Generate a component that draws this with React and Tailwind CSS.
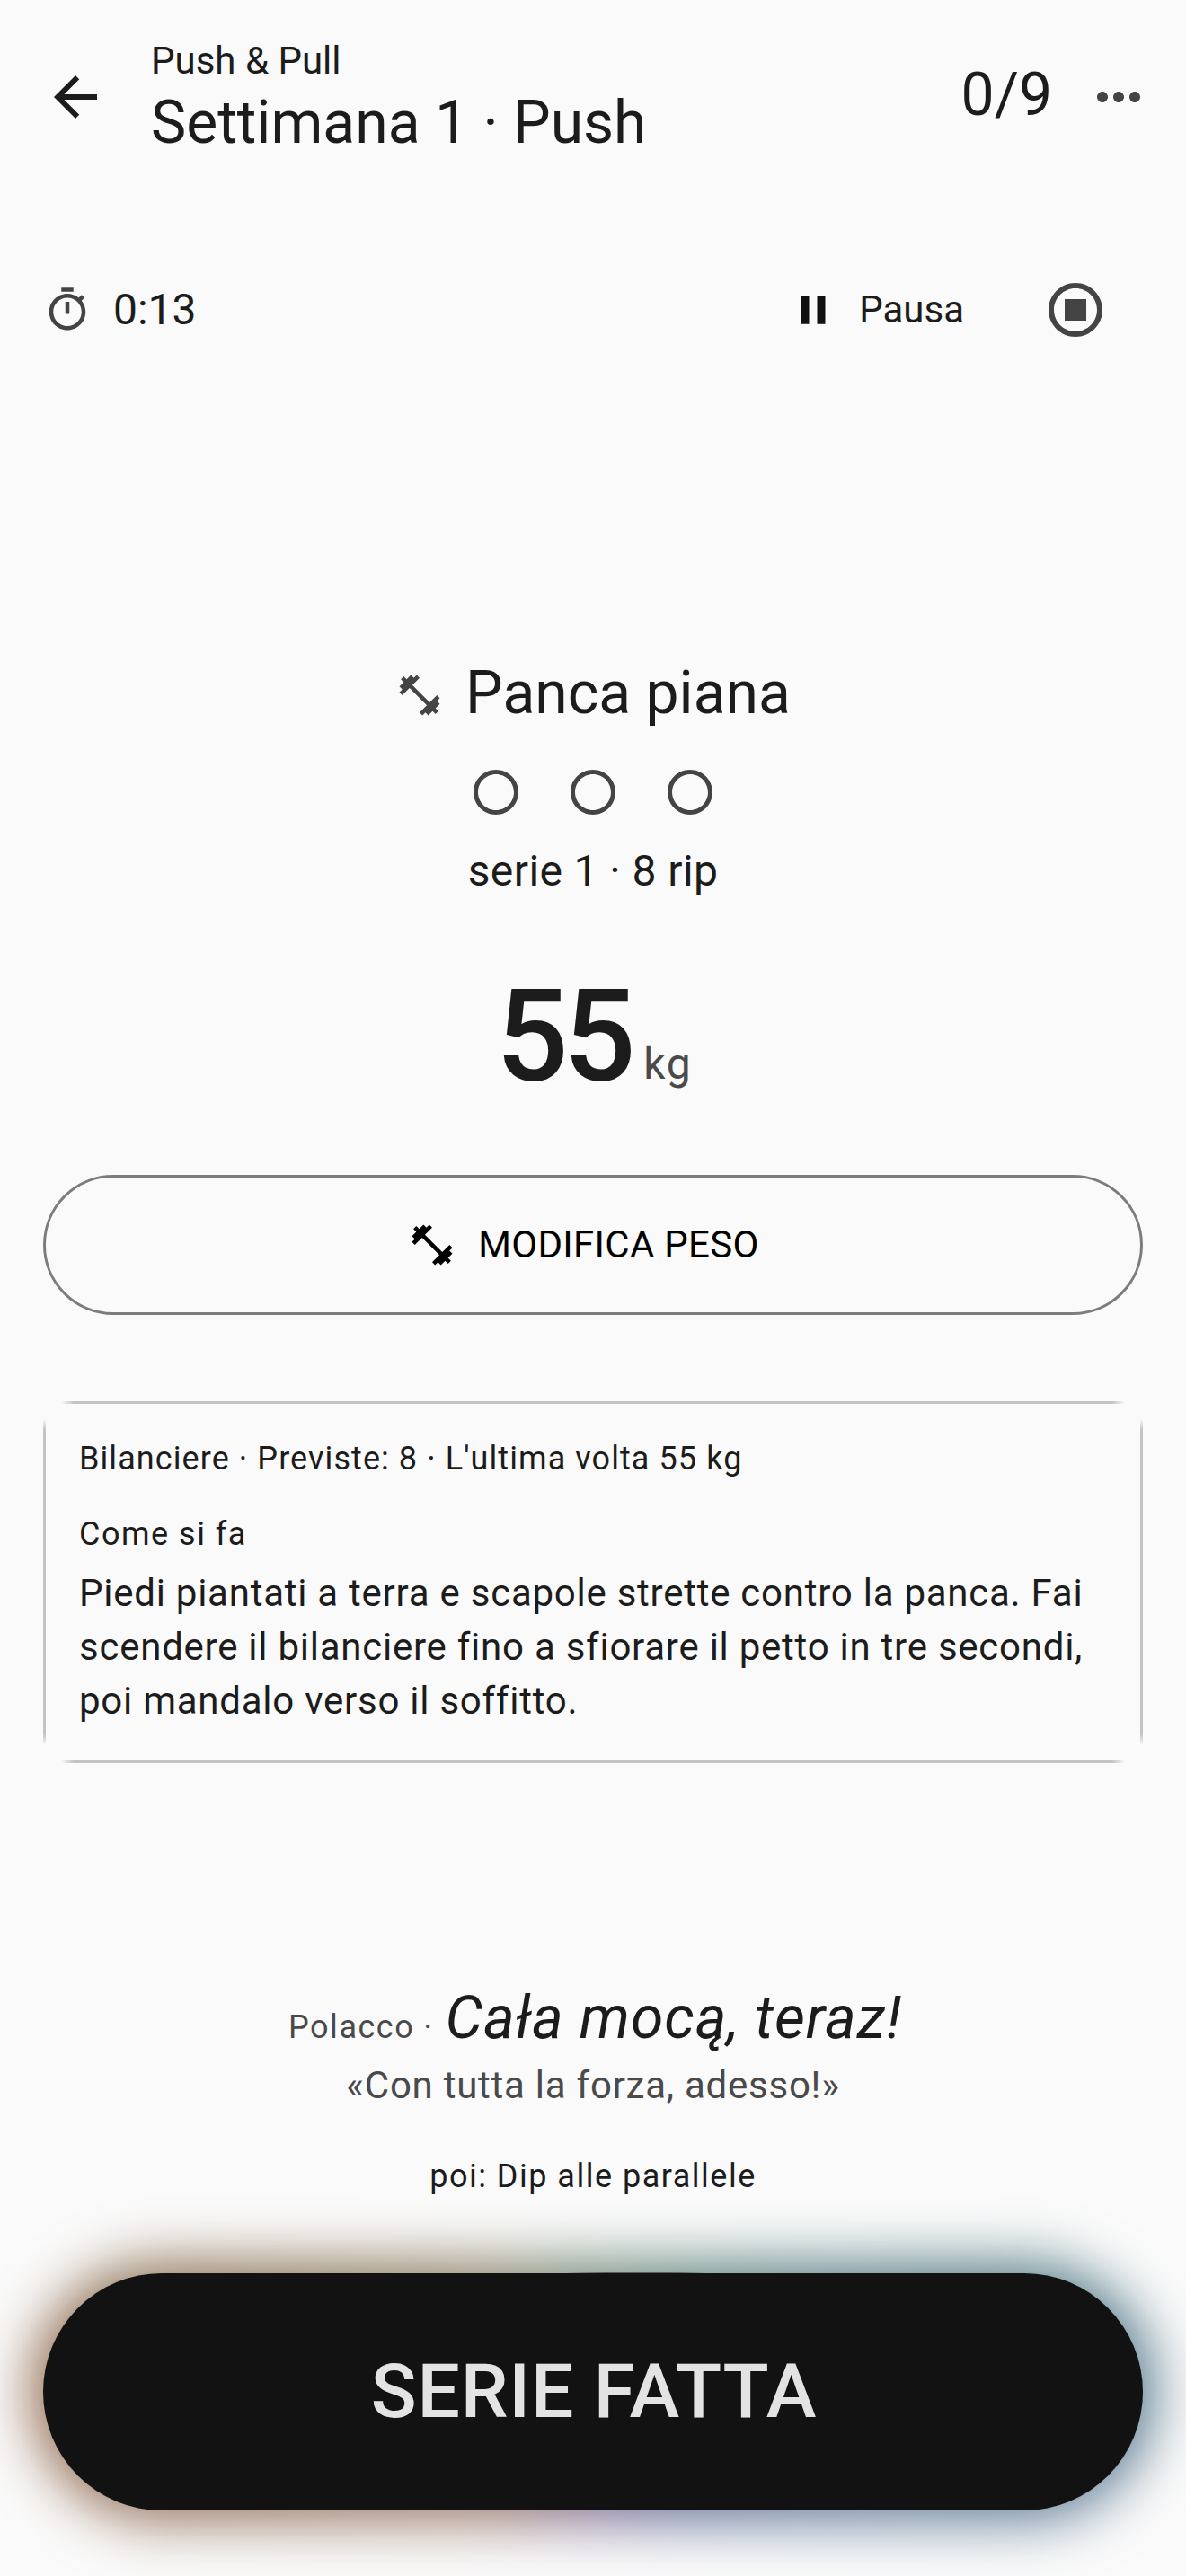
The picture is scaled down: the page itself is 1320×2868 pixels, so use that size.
const Icon = ({ d, className }) => (
  <svg viewBox="0 0 24 24" className={className} fill="currentColor" aria-hidden="true">
    <path d={d} />
  </svg>
);

const ARROW = "M20 11H7.83l5.59-5.59L12 4l-8 8 8 8 1.41-1.41L7.83 13H20v-2z";
const MORE = "M6 10c-1.1 0-2 .9-2 2s.9 2 2 2 2-.9 2-2-.9-2-2-2zm12 0c-1.1 0-2 .9-2 2s.9 2 2 2 2-.9 2-2-.9-2-2-2zm-6 0c-1.1 0-2 .9-2 2s.9 2 2 2 2-.9 2-2-.9-2-2-2z";
const TIMER = "M15 1H9v2h6V1zm-4 13h2V8h-2v6zm8.03-6.61l1.42-1.42c-.43-.51-.9-.99-1.41-1.41l-1.42 1.42C16.07 4.74 14.12 4 12 4c-4.97 0-9 4.03-9 9s4.02 9 9 9 9-4.03 9-9c0-2.12-.74-4.07-1.97-5.61zM12 20c-3.87 0-7-3.13-7-7s3.13-7 7-7 7 3.13 7 7-3.13 7-7 7z";
const PAUSE = "M6 19h4V5H6v14zm8-14v14h4V5h-4z";
const STOP = "M12 2C6.48 2 2 6.48 2 12s4.48 10 10 10 10-4.48 10-10S17.52 2 12 2zm0 18c-4.42 0-8-3.58-8-8s3.58-8 8-8 8 3.58 8 8-3.58 8-8 8zm4-12H8v8h8V8z";
const GYM = "M20.57 14.86L22 13.43 20.57 12 17 15.57 8.43 7 12 3.43 10.57 2 9.14 3.43 7.71 2 5.57 4.14 4.14 2.71 2.71 4.14l1.43 1.43L2 7.71l1.43 1.43L2 10.57 3.43 12 7 8.43 15.57 17 12 20.57 13.43 22l1.43-1.43L16.29 22l2.14-2.14 1.43 1.43 1.43-1.43-1.43-1.43L22 16.29z";
const RING = "M12 2C6.47 2 2 6.47 2 12s4.47 10 10 10 10-4.47 10-10S17.53 2 12 2zm0 18c-4.41 0-8-3.59-8-8s3.59-8 8-8 8 3.59 8 8-3.59 8-8 8z";

export default function App() {
  return (
    <div className="h-[2868px] w-[1320px] overflow-hidden bg-[#fafafa] font-[Roboto,sans-serif] text-[#1c1c1c]">
      {/* App bar */}
      <header className="flex h-[180px] items-start pt-[36px]">
        <div className="ml-[12px] flex h-[144px] w-[144px] shrink-0 items-center justify-center">
          <Icon d={ARROW} className="h-[72px] w-[72px]" />
        </div>
        <div className="ml-[12px] flex-1 pt-[5px]">
          <div className="h-[54px] text-[42px] leading-[54px]">Push &amp; Pull</div>
          <div className="h-[84px] text-[66px] leading-[84px]">Settimana 1 · Push</div>
        </div>
        <div className="flex h-[144px] items-center pb-[4px] text-[66px] leading-[84px]">0/9</div>
        <div className="ml-[2px] mr-[3px] flex h-[144px] w-[144px] shrink-0 items-center justify-center text-[#444444]">
          <Icon d={MORE} className="h-[72px] w-[72px]" />
        </div>
      </header>

      {/* Timer row */}
      <div className="mt-[120px] flex h-[90px] items-center pl-[48px] pr-[87px]">
        <Icon d={TIMER} className="h-[54px] w-[54px] text-[#444444]" />
        <span className="ml-[24px] text-[48px] leading-[60px]">0:13</span>
        <div className="ml-auto flex items-center">
          <Icon d={PAUSE} className="h-[54px] w-[54px] text-[#111111]" />
          <span className="ml-[24px] text-[42px] leading-[54px]">Pausa</span>
        </div>
        <Icon d={STOP} className="ml-[88px] h-[72px] w-[72px] text-[#444444]" />
      </div>

      {/* Exercise */}
      <div className="mt-[340px] flex h-[84px] items-center justify-center">
        <Icon d={GYM} className="mt-[4px] h-[54px] w-[54px] text-[#444444]" />
        <span className="ml-[24px] text-[66px] leading-[84px]">Panca piana</span>
      </div>
      <div className="mt-[38px] flex h-[60px] items-center justify-center gap-[48px] text-[#444444]">
        <Icon d={RING} className="h-[60px] w-[60px]" />
        <Icon d={RING} className="h-[60px] w-[60px]" />
        <Icon d={RING} className="h-[60px] w-[60px]" />
      </div>
      <div className="mt-[25px] h-[66px] text-center text-[48px] leading-[66px] tracking-[0.4px]">serie 1 · 8 rip</div>
      <div className="mt-[68px] flex h-[168px] items-baseline justify-center pl-[2px]">
        <span className="text-[142px] font-[550] leading-[168px] tracking-[-5.5px]">55</span>
        <span className="ml-[14px] -translate-y-[2px] text-[48px] leading-[60px] tracking-[1.5px] text-[#4a4a4a]">kg</span>
      </div>

      {/* Edit weight */}
      <button className="mx-[48px] mt-[69px] flex h-[156px] w-[1224px] items-center justify-center rounded-full border-[3px] border-[#7c7c7c] pr-[21px] text-[#000000]">
        <Icon d={GYM} className="h-[54px] w-[54px]" />
        <span className="ml-[24px] text-[42px] leading-[54px] tracking-[0.3px]">MODIFICA PESO</span>
      </button>

      {/* Details card */}
      <section className="relative mx-[48px] mt-[96px] h-[403px] px-[40px] pt-[43px]">
        <span className="absolute left-[20px] right-[20px] top-0 h-[3px] bg-[linear-gradient(90deg,transparent,#c4c4c4_14px,#c4c4c4_calc(100%-14px),transparent)]" />
        <span className="absolute bottom-0 left-[20px] right-[20px] h-[3px] bg-[linear-gradient(90deg,transparent,#c4c4c4_14px,#c4c4c4_calc(100%-14px),transparent)]" />
        <span className="absolute bottom-[20px] left-0 top-[20px] w-[3px] bg-[linear-gradient(180deg,transparent,#c4c4c4_12px,#c4c4c4_calc(100%-12px),transparent)]" />
        <span className="absolute bottom-[20px] right-0 top-[20px] w-[3px] bg-[linear-gradient(180deg,transparent,#c4c4c4_12px,#c4c4c4_calc(100%-12px),transparent)]" />
        <div className="h-[42px] text-[36px] leading-[42px] tracking-[1.08px]">Bilanciere · Previste: 8 · L'ultima volta 55 kg</div>
        <div className="mt-[42px] h-[42px] text-[36px] leading-[42px] tracking-[1.5px]">Come si fa</div>
        <p className="mt-[15px] text-[42px] leading-[60px] tracking-[0.75px]">
          Piedi piantati a terra e scapole strette contro la panca. Fai
          <br />
          scendere il bilanciere fino a sfiorare il petto in tre secondi,
          <br />
          poi mandalo verso il soffitto.
        </p>
      </section>

      {/* Phrase */}
      <div className="mt-[242px] flex h-[84px] items-baseline justify-center pl-[5px]">
        <span className="text-[36px] leading-[84px] tracking-[1.5px] text-[#4a4a4a]">Polacco ·</span>
        <span className="ml-[13px] text-[66px] italic leading-[84px] tracking-[0.9px]">Cała mocą, teraz!</span>
      </div>
      <div className="mt-[6px] h-[54px] text-center text-[42px] leading-[54px] tracking-[0.75px] text-[#4a4a4a]">«Con tutta la forza, adesso!»</div>
      <div className="mt-[50px] h-[48px] text-center text-[36px] leading-[48px] tracking-[1.5px]">poi: Dip alle parallele</div>

      {/* Primary action */}
      <div className="relative mx-[48px] mt-[84px] h-[264px]">
        <div className="absolute -inset-[10px] rounded-full blur-[32px] bg-[conic-gradient(#647e6c_0deg,#587c74_45deg,#4e777e_69deg,#46707f_85deg,#4c7086_90deg,#5c7693_107deg,#5f6996_150deg,#766790_163deg,#7a6888_190deg,#876976_204deg,#947362_230deg,#906f5c_250deg,#8a5e40_270deg,#836e4f_290deg,#87765e_310deg,#768069_332deg,#697e69_345deg,#647e6c_360deg)]" />
        <div className="absolute -top-[1px] left-[575px] h-[3px] w-[170px] rounded-[50%] bg-[#121212]/50" />
        <button className="relative flex h-[264px] w-full items-center justify-center rounded-full bg-[#121212] pl-[2px] text-[84px] font-[550] leading-[100px] tracking-[0.8px] text-[#e3e3e3]">
          SERIE FATTA
        </button>
      </div>
    </div>
  );
}
